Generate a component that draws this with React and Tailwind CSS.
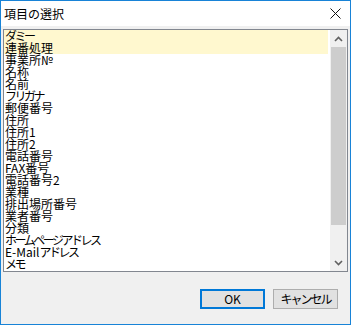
// 項目の選択 — Windows-style item picker dialog.

// kana in the original UI font is proportional, so kana runs (k) get tightened
const ITEMS = [
    { k: 'ダミー' }, { t: '連番処理' }, { t: '事業所№' }, { t: '名称' }, { t: '名前' },
    { k: 'フリガナ' }, { t: '郵便番号' }, { t: '住所' }, { t: '住所1' }, { t: '住所2' },
    { t: '電話番号' }, { t: 'FAX番号' }, { t: '電話番号2' }, { t: '業種' }, { t: '排出場所番号' },
    { t: '業者番号' }, { t: '分類' }, { k: 'ホームページアドレス' },
    { t: 'E-Mail', k: 'アドレス' }, { k: 'メモ' },
];

function Chevron({ down = false }) {
    return (
        <svg width="9" height="6" viewBox="0 0 9 6" className={down ? 'rotate-180' : ''}>
            <path d="M1 5 L4.5 1.5 L8 5" fill="none" stroke="#606060" strokeWidth="1.6" />
        </svg>
    );
}

export default function App() {
    return (
        <div className="w-[351px] h-[325px] border border-[#1883d7] bg-[#f0f0f0] flex flex-col text-black font-['Noto_Sans_CJK_JP','Liberation_Sans',sans-serif]">
            {/* title bar */}
            <div className="h-[25px] bg-white flex items-center justify-between pl-[3px] shrink-0">
                <span className="text-[12px] leading-[12px]">項目の選択</span>
                <svg width="11" height="11" viewBox="0 0 11 11" className="mr-[9px]">
                    <path d="M0.5 0.5 L10.5 10.5 M10.5 0.5 L0.5 10.5" stroke="#111" strokeWidth="1" />
                </svg>
            </div>

            <div className="flex-1 flex flex-col px-[2px] pt-[3px]">
                {/* list box */}
                <div className="h-[243px] border border-[#828790] bg-white flex">
                    <div className="flex-1 flex flex-col">
                        {ITEMS.map((item, i) => (
                            <div
                                key={i}
                                className={`h-[12px] leading-[12px] text-[12px] pl-[1px] whitespace-nowrap mr-[2px] ${i < 2 ? 'bg-[#fff8cf]' : ''}`}
                            >
                                {item.t}
                                {item.k && <span className="tracking-[-2.5px]">{item.k}</span>}
                            </div>
                        ))}
                    </div>
                    <div className="w-[17px] bg-[#f0f0f0] flex flex-col">
                        <div className="h-[17px] flex items-center justify-center">
                            <Chevron />
                        </div>
                        <div className="h-[178px] mx-[1px] bg-[#cdcdcd]" />
                        <div className="flex-1" />
                        <div className="h-[17px] flex items-center justify-center">
                            <Chevron down />
                        </div>
                    </div>
                </div>

                {/* buttons */}
                <div className="flex justify-end gap-[8px] pr-[10px] mt-[17px]">
                    <button className="w-[65px] h-[20px] border-2 border-[#0078d7] bg-[#e1e1e1] text-[12px] leading-[12px]">
                        OK
                    </button>
                    <button className="w-[65px] h-[20px] border border-[#adadad] bg-[#e1e1e1] text-[12px] leading-[12px] tracking-[-2px]">
                        キャンセル
                    </button>
                </div>
            </div>
        </div>
    );
}
